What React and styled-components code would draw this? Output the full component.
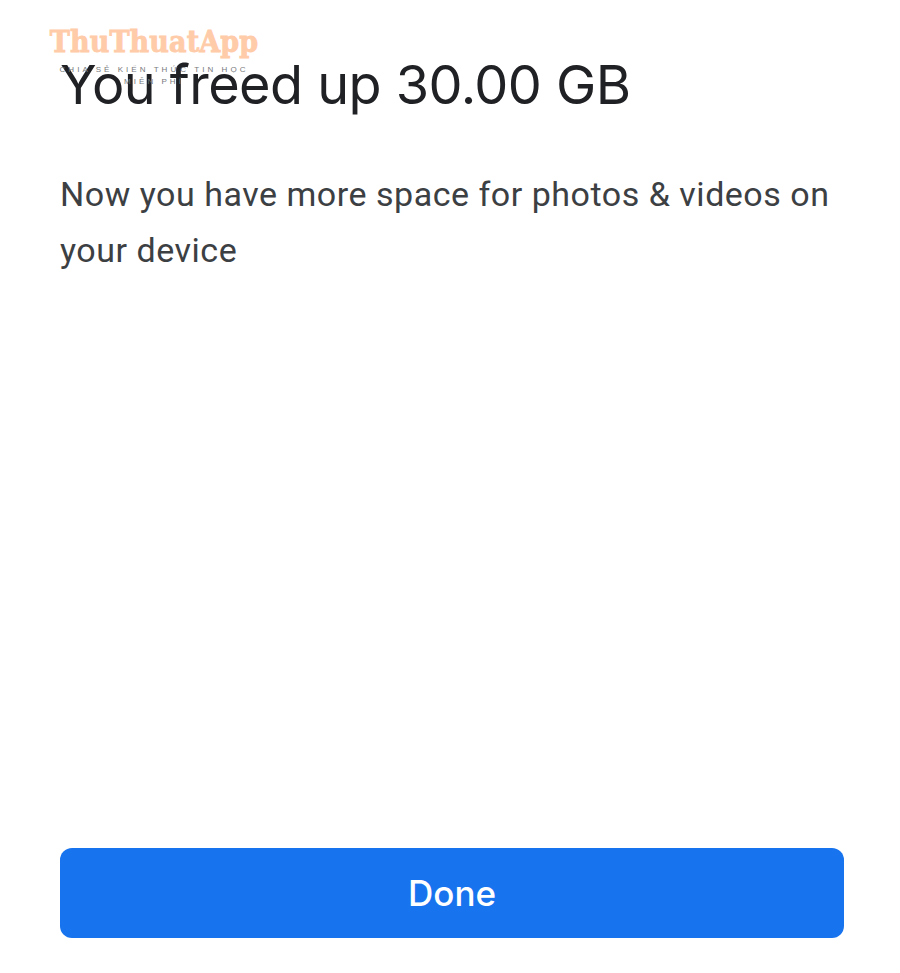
import React from 'react'
import styled, { createGlobalStyle } from 'styled-components'

const GlobalStyle = createGlobalStyle`
  html, body {
    margin: 0;
    padding: 0;
    background: #fff;
  }
`

const Page = styled.div`
  position: relative;
  box-sizing: border-box;
  width: 900px;
  height: 973px;
  padding: 49px 56px 35px 60px;
  display: flex;
  flex-direction: column;
  font-family: 'Inter', 'Liberation Sans', sans-serif;
`

const Title = styled.h1`
  margin: 0;
  font-size: 54px;
  line-height: 72px;
  font-weight: 400;
  letter-spacing: -0.55px;
  color: #202124;
`

const Message = styled.p`
  margin: 45px 0 0;
  font-family: 'Roboto', 'Liberation Sans', sans-serif;
  font-size: 34px;
  line-height: 56px;
  font-weight: 400;
  letter-spacing: 0.52px;
  color: #3c4043;
`

const DoneButton = styled.button`
  margin-top: auto;
  height: 90px;
  width: 100%;
  border: none;
  border-radius: 12px;
  background: #1873ee;
  color: #fff;
  font-family: 'Inter', 'Liberation Sans', sans-serif;
  font-size: 35px;
  font-weight: 500;
`

const Watermark = styled.div`
  position: absolute;
  left: 49px;
  top: 24px;
  width: 210px;
  text-align: center;
  pointer-events: none;
`

const Brand = styled.div`
  font-family: 'DejaVu Serif', serif;
  font-weight: 700;
  font-stretch: condensed;
  font-size: 30px;
  line-height: 36px;
  letter-spacing: 0.1px;
  color: #ffcba8;
  -webkit-text-stroke: 0.8px #ffcba8;
  white-space: nowrap;
  margin-bottom: 4px;
`

const Tagline = styled.div`
  font-family: 'Liberation Sans', sans-serif;
  font-size: 8px;
  line-height: 12px;
  letter-spacing: 3.05px;
  color: #77797c;
  white-space: nowrap;
`

export default function App() {
  return (
    <>
      <GlobalStyle />
      <Page>
        <Title>You freed up 30.00 GB</Title>
        <Message>Now you have more space for photos &amp; videos on your device</Message>
        <DoneButton>Done</DoneButton>
        <Watermark>
          <Brand>ThuThuatApp</Brand>
          <Tagline>CHIA SẺ KIẾN THỨC TIN HỌC</Tagline>
          <Tagline>MIỄN PHÍ</Tagline>
        </Watermark>
      </Page>
    </>
  )
}
